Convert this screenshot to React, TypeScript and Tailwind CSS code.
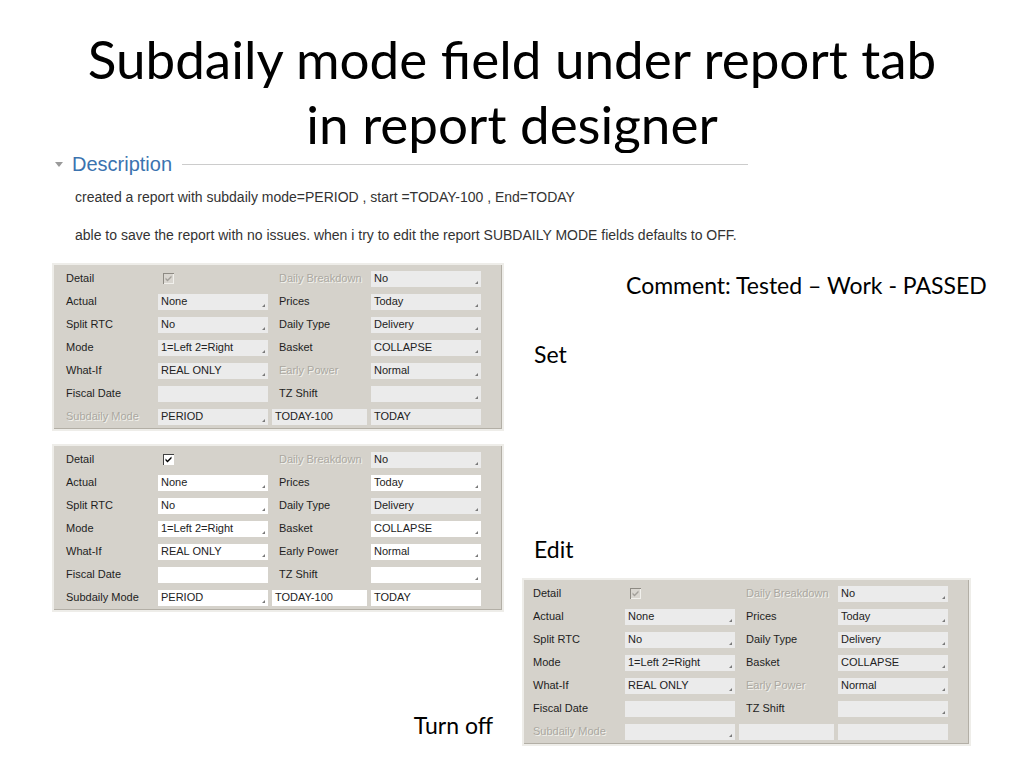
import React from "react";

type Variant = "set" | "edit" | "off";

const ui = "font-['Liberation_Sans',Arial,sans-serif] text-[11px]";
const slide = "font-['Lato','Open_Sans',sans-serif]";

function Grip() {
  return (
    <svg className="absolute right-[3px] bottom-[3px]" width="3" height="3" viewBox="0 0 3 3">
      <path d="M3 0 L3 3 L0 3 Z" fill="#7a7a7a" />
    </svg>
  );
}

function Field({
  value,
  grip = true,
  white = false,
  className = "w-[110px]",
}: {
  value: string;
  grip?: boolean;
  white?: boolean;
  className?: string;
}) {
  return (
    <div
      className={`relative h-[16px] shrink-0 pl-[3px] leading-[15px] text-[#222] ${ui} ${
        white ? "bg-white" : "bg-[#ebebeb]"
      } ${className}`}
    >
      {value}
      {grip && <Grip />}
    </div>
  );
}

function Label({ text, off = false, gap = false }: { text: string; off?: boolean; gap?: boolean }) {
  return (
    <div
      className={`w-[92px] shrink-0 ${gap ? "ml-[11px]" : ""} ${
        off ? "text-[#aba8a1] [text-shadow:1px_1px_0_#f3f2ee]" : "text-[#1e1e1e]"
      }`}
    >
      {text}
    </div>
  );
}

function CheckBox({ enabled }: { enabled: boolean }) {
  return (
    <svg width="11" height="11" viewBox="0 0 11 11" className="ml-[5px]">
      <rect x="0" y="0" width="11" height="11" fill={enabled ? "#404040" : "#8d8a83"} />
      <rect x="1" y="1" width="10" height="10" fill={enabled ? "#ffffff" : "#f1f0ec"} />
      <rect x="1" y="1" width="9" height="9" fill={enabled ? "#ffffff" : "#d9d6d0"} />
      <path
        d="M2.5 4.5 L4.5 6.5 L8.5 2.5 L8.5 4.5 L4.5 8.5 L2.5 6.5 Z"
        fill={enabled ? "#000000" : "#a3a09a"}
      />
    </svg>
  );
}

const rows = [
  { l1: "Actual", f1: "None", l2: "Prices", f3: "Today" },
  { l1: "Split RTC", f1: "No", l2: "Daily Type", f3: "Delivery" },
  { l1: "Mode", f1: "1=Left 2=Right", l2: "Basket", f3: "COLLAPSE" },
  { l1: "What-If", f1: "REAL ONLY", l2: "Early Power", f3: "Normal" },
  { l1: "Fiscal Date", f1: "", l2: "TZ Shift", f3: "" },
];

function Panel({ variant, className = "" }: { variant: Variant; className?: string }) {
  const edit = variant === "edit";
  const off = variant === "off";
  const dimmed = (label: string) =>
    label === "Daily Breakdown" || (!edit && (label === "Early Power" || label === "Subdaily Mode"));
  const white = (label: string) => edit && label !== "Daily Type";

  return (
    <div
      className={`border-2 border-[#eeede9] bg-[#d5d2cb] shadow-[inset_-1px_-1px_0_#b3afa6] pt-[2px] pb-[1px] pr-[21px] ${ui} ${className}`}
    >
      <div className="flex items-center h-[23px]">
        <Label text="Detail" />
        <div className="w-[110px] shrink-0 flex items-center">
          <CheckBox enabled={edit} />
        </div>
        <Label text="Daily Breakdown" off gap />
        <Field value="No" />
      </div>
      {rows.map((r) => (
        <div key={r.l1} className="flex items-center h-[23px]">
          <Label text={r.l1} />
          <Field value={r.f1} grip={r.l1 !== "Fiscal Date"} white={edit} />
          <Label text={r.l2} off={dimmed(r.l2)} gap />
          <Field value={r.f3} white={white(r.l2)} />
        </div>
      ))}
      <div className="flex items-center h-[23px]">
        <Label text="Subdaily Mode" off={dimmed("Subdaily Mode")} />
        <Field value={off ? "" : "PERIOD"} white={edit} />
        <Field value={off ? "" : "TODAY-100"} grip={false} white={edit} className="w-[95px] ml-[4px] mr-[4px]" />
        <Field value={off ? "" : "TODAY"} grip={false} white={edit} />
      </div>
    </div>
  );
}

export default function App() {
  return (
    <div className="w-[1024px] h-[768px] bg-white overflow-hidden">
      {/* slide title, bottom cut off by the pasted description */}
      <div className={`h-[153px] overflow-hidden pt-[26px] text-center text-[53px] leading-[65px] text-black ${slide}`}>
        Subdaily mode field under report tab
        <br />
        in report designer
      </div>

      <div className="pl-[55px] w-[748px] font-['Liberation_Sans',Arial,sans-serif]">
        <div className="flex items-center h-[22px]">
          <svg width="8" height="5" viewBox="0 0 8 5">
            <path d="M0 0 L8 0 L4 5 Z" fill="#9a9a9a" />
          </svg>
          <span className="ml-[9px] text-[20px] text-[#3b73af] leading-[22px]">Description</span>
          <div className="flex-1 ml-[10px] h-px bg-[#cccccc]" />
        </div>
        <p className="mt-[14px] pl-[20px] text-[14px] leading-[16px] text-[#333]">
          created a report with subdaily mode=PERIOD , start =TODAY-100 , End=TODAY
        </p>
        <p className="mt-[22px] pl-[20px] text-[14px] leading-[16px] text-[#333]">
          able to save the report with no issues. when i try to edit the report SUBDAILY MODE fields defaults to OFF.
        </p>
      </div>

      <div className="flex mt-[20px]">
        <div className="pl-[52px] flex flex-col w-[505px]">
          <Panel variant="set" className="pl-[12px] self-start" />
          <Panel variant="edit" className="pl-[12px] self-start mt-[13px]" />
          <div className={`self-end mr-[12px] mt-[98px] text-[23px] leading-[30px] text-black ${slide}`}>Turn off</div>
        </div>
        <div className={`ml-[17px] flex flex-col text-[23px] leading-[30px] text-black ${slide}`}>
          <div className="mt-[7px] pl-[104px]">Comment: Tested – Work - PASSED</div>
          <div className="mt-[39px] pl-[12px]">Set</div>
          <div className="mt-[165px] pl-[12px]">Edit</div>
          <Panel variant="off" className="pl-[9px] self-start mt-[14px] leading-normal" />
        </div>
      </div>
    </div>
  );
}
